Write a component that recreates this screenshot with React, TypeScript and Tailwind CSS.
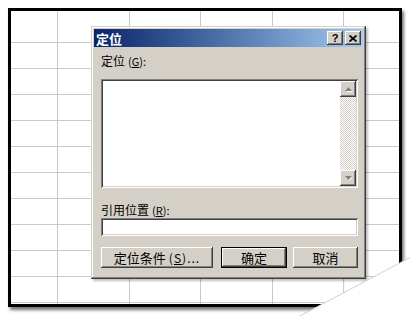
import React from "react";

const FONT = { fontFamily: '"Noto Sans CJK SC", "Liberation Sans", sans-serif' } as React.CSSProperties;

const raised =
  "shadow-[inset_-1px_-1px_#404040,inset_1px_1px_#ffffff,inset_-2px_-2px_#808080,inset_2px_2px_#d4d0c8]";
const sunken =
  "shadow-[inset_1px_1px_#808080,inset_-1px_-1px_#ffffff,inset_2px_2px_#404040,inset_-2px_-2px_#d4d0c8]";

function Grid() {
  const rows = Array.from({ length: 12 }, (_, i) => i);
  const cols = Array.from({ length: 6 }, (_, i) => i);
  return (
    <div className="grid h-full w-full grid-cols-[47px_72px_71px_72px_71px_1fr] grid-rows-[32px_repeat(10,26px)_1fr] bg-white">
      {rows.map((r) =>
        cols.map((c) => (
          <div
            key={`${r}-${c}`}
            className={
              (c < 5 ? "border-r " : "") +
              (r < 11 ? "border-b " : "") +
              "border-[#c9c9c9]"
            }
          />
        ))
      )}
    </div>
  );
}

function ScrollArrow({ up }: { up: boolean }) {
  return (
    <div className={`flex h-[16px] w-[16px] items-center justify-center bg-[#d4d0c8] ${raised}`}>
      <svg width="9" height="6" viewBox="0 0 9 6">
        {up ? (
          <>
            <path d="M1.5 5 L4.5 1.5 L7.5 5 Z" fill="#ffffff" transform="translate(1,1)" />
            <path d="M1 5 L4.5 1 L8 5 Z" fill="#808080" />
          </>
        ) : (
          <>
            <path d="M1.5 1 L4.5 4.5 L7.5 1 Z" fill="#ffffff" transform="translate(1,1)" />
            <path d="M1 1 L4.5 5 L8 1 Z" fill="#808080" />
          </>
        )}
      </svg>
    </div>
  );
}

function Btn({ children, w, isDefault }: { children: React.ReactNode; w: string; isDefault?: boolean }) {
  if (isDefault) {
    return (
      <div className={`${w} h-[21px] border border-black`}>
        <div className={`flex h-full w-full items-center justify-center bg-[#d4d0c8] text-[13px] text-black ${raised}`}>
          {children}
        </div>
      </div>
    );
  }
  return (
    <div className={`${w} flex h-[21px] items-center justify-center bg-[#d4d0c8] text-[13px] text-black ${raised}`}>
      {children}
    </div>
  );
}

function Dialog() {
  return (
    <div
      className="absolute left-[91px] top-[26px] h-[253px] w-[275px] bg-[#d4d0c8] p-[3px] shadow-[inset_-1px_-1px_#404040,inset_1px_1px_#d4d0c8,inset_-2px_-2px_#808080,inset_2px_2px_#ffffff,2px_2px_2px_rgba(0,0,0,0.25)]"
      style={FONT}
    >
      <div className="flex h-[18px] items-center justify-between bg-linear-to-r from-[#0a246a] to-[#a6caf0] pl-[2px] pr-[2px]">
        <span className="text-[13px] font-bold leading-none text-white">定位</span>
        <div className="flex gap-[2px]">
          <div className={`flex h-[14px] w-[16px] items-center justify-center bg-[#d4d0c8] ${raised}`}>
            <span className="text-[11px] font-bold leading-none text-black" style={{ fontFamily: '"Liberation Sans", sans-serif' }}>
              ?
            </span>
          </div>
          <div className={`flex h-[14px] w-[16px] items-center justify-center bg-[#d4d0c8] ${raised}`}>
            <svg width="8" height="7" viewBox="0 0 8 7">
              <path d="M0.5 0.5 L7.5 6.5 M7.5 0.5 L0.5 6.5" stroke="#000" strokeWidth="1.7" />
            </svg>
          </div>
        </div>
      </div>

      <div className="flex flex-col pl-[7px] pr-[5px]">
        <div className="mt-[7px] flex h-[14px] items-center text-[12px] leading-none text-black">
          定位<span className="ml-[3px] text-[11px]">(<span className="underline">G</span>):</span>
        </div>

        <div className={`mt-[11px] flex h-[109px] bg-white p-[2px] ${sunken}`}>
          <div className="flex-1" />
          <div className="flex w-[16px] flex-col">
            <ScrollArrow up />
            <div className="flex-1 bg-[repeating-conic-gradient(#d4d0c8_0%_25%,#ffffff_0%_50%)] bg-[length:2px_2px]" />
            <ScrollArrow up={false} />
          </div>
        </div>

        <div className="mt-[15px] flex h-[14px] items-center text-[12px] leading-none text-black">
          引用位置<span className="ml-[3px] text-[11px]">(<span className="underline">R</span>):</span>
        </div>

        <div className={`mt-[1px] h-[18px] bg-white ${sunken}`} />

        <div className="mt-[11px] flex items-center">
          <Btn w="w-[112px]">
            定位条件<span className="ml-[3px] text-[12px] tracking-[1px]">(<span className="underline">S</span>)...</span>
          </Btn>
          <div className="ml-[8px]">
            <Btn w="w-[66px]" isDefault>
              确定
            </Btn>
          </div>
          <div className="ml-[6px]">
            <Btn w="w-[65px]">取消</Btn>
          </div>
        </div>
      </div>
    </div>
  );
}

export default function App() {
  return (
    <div className="relative h-[316px] w-[410px] overflow-hidden bg-white">
      <div className="ml-[8px] pt-[8px]">
        <div className="h-[299px] w-[394px] border-[3px] border-black shadow-[2px_3px_3px_rgba(0,0,0,0.55)]">
          <Grid />
        </div>
      </div>
      <Dialog />
      <svg className="pointer-events-none absolute left-0 top-0" width="410" height="316" viewBox="0 0 410 316">
        <polygon points="411,257 411,317 298,317" fill="#ffffff" />
        <line x1="411" y1="257" x2="298" y2="317" stroke="#d0d0d0" strokeWidth="1" />
        <line x1="344" y1="281" x2="344" y2="296" stroke="#d8d8d8" strokeWidth="1" strokeDasharray="1 2" />
      </svg>
    </div>
  );
}
